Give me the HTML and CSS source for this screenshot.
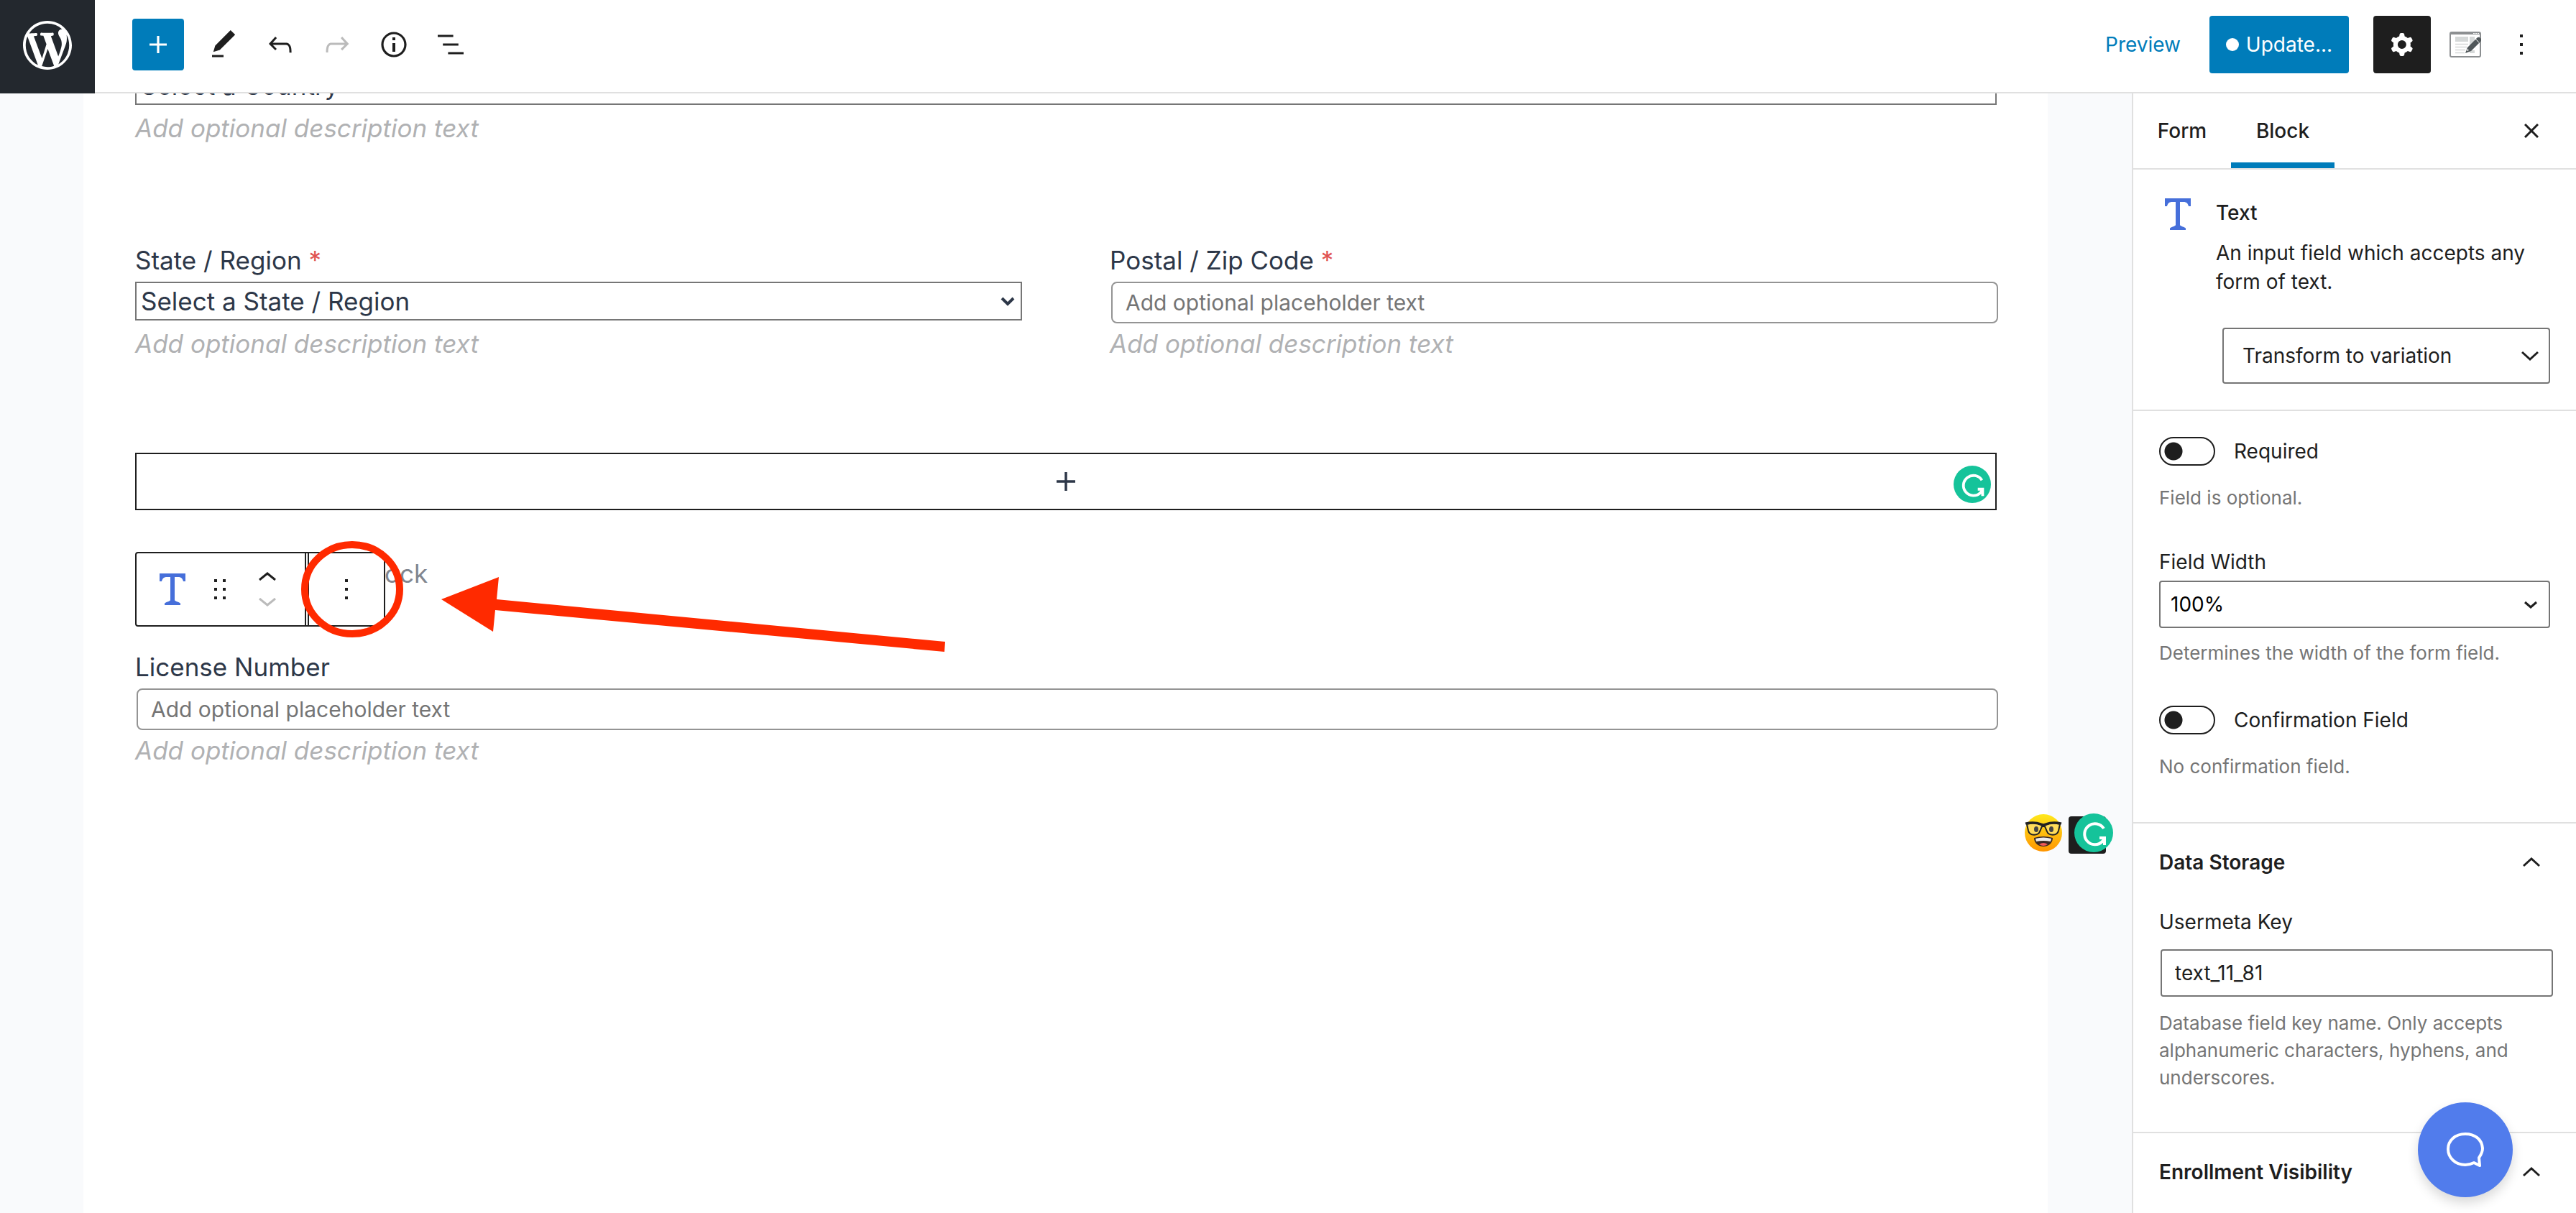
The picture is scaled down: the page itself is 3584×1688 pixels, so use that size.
FILE: index.html
```html
<!DOCTYPE html>
<html lang="en">
<head>
    <meta charset="UTF-8">
    <meta name="viewport" content="width=device-width, initial-scale=1.0">
    <title>Edit Form</title>
    <link rel="stylesheet" href="styles.css">
</head>
<body>

    <header class="header">
        <a class="wp-logo" href="#" aria-label="View forms">
            <svg viewBox="0 0 20 20" fill="currentColor"><path d="M20 10c0-5.51-4.49-10-10-10C4.48 0 0 4.49 0 10c0 5.52 4.48 10 10 10 5.51 0 10-4.48 10-10zM7.78 15.37L4.37 6.22c.55-.02 1.17-.08 1.17-.08.5-.06.44-1.13-.06-1.11 0 0-1.45.11-2.37.11-.18 0-.37 0-.58-.01C4.12 2.69 6.87 1.11 10 1.11c2.33 0 4.45.87 6.05 2.34-.68-.11-1.65.39-1.65 1.58 0 .74.45 1.36.9 2.1.35.61.55 1.36.55 2.46 0 1.49-1.4 5-1.4 5l-3.03-8.37c.54-.02.82-.17.82-.17.5-.05.44-1.25-.06-1.22 0 0-1.44.12-2.38.12-.87 0-2.33-.12-2.33-.12-.5-.03-.56 1.2-.06 1.22l.92.08 1.26 3.41zM17.41 10c.24-.64.74-1.87.43-4.25.7 1.29 1.05 2.71 1.05 4.25 0 3.29-1.73 6.24-4.4 7.78.97-2.59 1.94-5.2 2.92-7.78zM6.1 18.09C3.12 16.65 1.11 13.53 1.11 10c0-1.3.23-2.48.72-3.59C3.25 10.3 4.67 14.2 6.1 18.09zm4.03-6.63l2.58 6.98c-.86.29-1.76.45-2.71.45-.79 0-1.57-.11-2.29-.33.81-2.38 1.62-4.74 2.42-7.1z"/></svg>
        </a>
        <div class="tools">
            <button class="tool tool-add" aria-label="Add block">
                <svg viewBox="0 0 24 24" fill="currentColor"><path d="M18 11.2h-5.2V6h-1.6v5.2H6v1.6h5.2V18h1.6v-5.2H18z"/></svg>
            </button>
            <button class="tool" aria-label="Edit">
                <svg viewBox="0 0 24 24" fill="currentColor"><path d="M20.1 5.1L16.9 2 6.2 12.7l-1.3 4.4 4.5-1.3L20.1 5.1zM4 20.8h8v-1.5H4v1.5z"/></svg>
            </button>
            <button class="tool" aria-label="Undo">
                <svg viewBox="0 0 24 24" fill="currentColor"><path d="M18.3 11.7c-.6-.6-1.4-.9-2.3-.9H6.7l2.9-3.3-1.1-1-4.5 5L8.5 16l1-1-2.7-2.7H16c.5 0 .9.2 1.3.5 1 1 1 3.4 1 4.5v.3h1.5v-.2c0-1.5 0-4.3-1.5-5.7z"/></svg>
            </button>
            <button class="tool" aria-label="Redo" disabled>
                <svg viewBox="0 0 24 24" fill="currentColor"><path d="M15.6 6.5l-1.1 1 2.9 3.3H8c-.9 0-1.7.3-2.3.9-1.4 1.5-1.4 4.2-1.4 5.6v.2h1.5v-.3c0-1.1 0-3.5 1-4.5.3-.3.7-.5 1.3-.5h9.2L14.5 15l1.1 1.1 4.6-4.6-4.6-5z"/></svg>
            </button>
            <button class="tool" aria-label="Details">
                <svg viewBox="0 0 24 24" fill="currentColor"><path d="M12 3.2c-4.8 0-8.8 3.9-8.8 8.8 0 4.8 3.9 8.8 8.8 8.8 4.8 0 8.8-3.9 8.8-8.8 0-4.8-4-8.8-8.8-8.8zm0 16c-4 0-7.2-3.3-7.2-7.2C4.8 8 8 4.8 12 4.8s7.2 3.3 7.2 7.2c0 4-3.2 7.2-7.2 7.2zM11 17h2v-6h-2v6zm0-8h2V7h-2v2z"/></svg>
            </button>
            <button class="tool" aria-label="List view">
                <svg viewBox="0 0 24 24" fill="currentColor"><path d="M13.8 5.2H3v1.5h10.800V5.2zm-3.600 12v1.500H21v-1.500H10.200zm7.200-6H6.600v1.500h10.800v-1.500z"/></svg>
            </button>
        </div>
        <div class="actions">
            <a class="preview" href="#">Preview</a>
            <button class="update"><span class="dot"></span>Update...</button>
            <button class="settings" aria-label="Settings">
                <svg viewBox="0 0 24 24" fill="currentColor"><path fill-rule="evenodd" d="M10.289 4.836A1 1 0 0111.275 4h1.306a1 1 0 01.987.836l.244 1.466c.787.26 1.503.679 2.108 1.218l1.393-.522a1 1 0 011.216.437l.653 1.130a1 1 0 01-.23 1.273l-1.148.944a6.025 6.025 0 010 2.435l1.149.946a1 1 0 01.23 1.272l-.653 1.130a1 1 0 01-1.216.437l-1.394-.522c-.605.540-1.320.958-2.108 1.218l-.244 1.466a1 1 0 01-.987.836h-1.306a1 1 0 01-.986-.836l-.244-1.466a5.995 5.995 0 01-2.108-1.218l-1.394.522a1 1 0 01-1.217-.436l-.653-1.131a1 1 0 01.23-1.272l1.149-.946a6.026 6.026 0 010-2.435l-1.148-.944a1 1 0 01-.23-1.272l.653-1.131a1 1 0 011.217-.437l1.393.522a5.994 5.994 0 012.108-1.218l.244-1.466zM14.929 12a3 3 0 11-6 0 3 3 0 016 0z"/></svg>
            </button>
            <button class="plain" aria-label="Form templates">
                <svg class="pad-icon" viewBox="0 0 44 36">
                    <rect x="1" y="1" width="42" height="34" rx="2" fill="#fff" stroke="#8c8f91" stroke-width="2"/>
                    <path d="M1 1h42v3H1z" fill="#8c8f91"/>
                    <path d="M33 2h2v1h-2zM36 2h2v1h-2zM39 2h2v1h-2z" fill="#fff"/>
                    <path d="M8 7h18v7H8zM28 7h7v13h-7zM28 26h7v4h-7z" fill="#d5d8d8"/>
                    <path d="M8 17.500h18M8 21.500h16M8 25.500h14M8 29.500h13" stroke="#d5d8d8" stroke-width="1.500"/>
                    <path d="M22 30l3-8L37 10q3-4 6-1t0 5L30 27z" fill="#50575a"/>
                    <path d="M36 10l5 5" stroke="#fff"/>
                    <path d="M24 27l1-3 2 2z" fill="#fff"/>
                </svg>
            </button>
            <button class="plain plain-narrow" aria-label="Options">
                <svg viewBox="0 0 24 24" fill="currentColor"><path d="M13 19h-2v-2h2v2zm0-6h-2v-2h2v2zm0-6h-2V5h2v2z"/></svg>
            </button>
        </div>
    </header>

    <div class="editor">
        <main class="canvas">
            <div class="page">
                <div class="field field-country">
                    <select class="form-select" aria-label="Country"><option>Select a Country</option></select>
                    <p class="description">Add optional description text</p>
                </div>

                <div class="columns">
                    <div class="field">
                        <label for="state">State / Region <span class="required">*</span></label>
                        <div class="select-wrap">
                            <select class="form-select" id="state"><option>Select a State / Region</option></select>
                            <svg class="select-arrow" viewBox="0 0 20 20" fill="none" stroke="currentColor" stroke-width="4"><path d="M2 6l8 8 8-8"/></svg>
                        </div>
                        <p class="description">Add optional description text</p>
                    </div>
                    <div class="field">
                        <label for="zip">Postal / Zip Code <span class="required">*</span></label>
                        <input class="form-input" type="text" id="zip" placeholder="Add optional placeholder text">
                        <p class="description">Add optional description text</p>
                    </div>
                </div>

                <button class="appender" aria-label="Add block">
                    <svg class="plus" viewBox="0 0 24 24" fill="currentColor"><path d="M18 11.2h-5.2V6h-1.6v5.2H6v1.6h5.2V18h1.6v-5.2H18z"/></svg>
                    <svg class="grammarly" viewBox="0 0 54 54"><circle cx="27" cy="27" r="27" fill="#15c39a"/><path d="M41 21a14.500 14.500 0 1 0-2 18l3-4M35 34h7v10" fill="none" stroke="#fff" stroke-width="4"/></svg>
                </button>

                <div class="block-row">
                    <p class="prompt">Type / to choose a block</p>
                    <div class="block-toolbar">
                        <div class="toolbar-group">
                            <button class="bar-button" aria-label="Text">
                                <svg class="type-icon" viewBox="0 0 36 44"><path d="M0 0h36v11h-3c-1-4-3-6-7-6h-5v32c0 2 8 3 8 5v2H7v-2c0-2 8-3 8-5V5h-5c-4 0-6 2-7 6H0z"/></svg>
                            </button>
                            <button class="bar-button bar-drag" aria-label="Drag">
                                <svg viewBox="0 0 24 24" fill="currentColor"><path d="M8 5h2v2H8zM14 5h2v2h-2zM8 11h2v2H8zM14 11h2v2h-2zM8 17h2v2H8zM14 17h2v2h-2z"/></svg>
                            </button>
                            <div class="movers">
                                <button aria-label="Move up"><svg viewBox="0 0 24 12" fill="none" stroke="currentColor" stroke-width="3"><path d="M1 11L12 2l11 9"/></svg></button>
                                <button aria-label="Move down" disabled><svg viewBox="0 0 24 12" fill="none" stroke="currentColor" stroke-width="3"><path d="M1 1l11 9 11-9"/></svg></button>
                            </div>
                        </div>
                        <div class="toolbar-group toolbar-more">
                            <button class="bar-button" aria-label="More options">
                                <svg viewBox="0 0 24 24" fill="currentColor"><path d="M13 19h-2v-2h2v2zm0-6h-2v-2h2v2zm0-6h-2V5h2v2z"/></svg>
                            </button>
                        </div>
                    </div>
                    <svg class="annotation" viewBox="0 0 900 160">
                        <ellipse cx="72" cy="68" rx="66" ry="62" fill="none" stroke="#ff2a00" stroke-width="10"/>
                        <path d="M196 82l80-31-3 31 624 59-1 14-625-58-3 30z" fill="#ff2a00"/>
                    </svg>
                </div>

                <div class="field field-license">
                    <label for="license">License Number</label>
                    <input class="form-input" type="text" id="license" placeholder="Add optional placeholder text">
                    <p class="description">Add optional description text</p>
                </div>
            </div>

            <div class="badges">
                <svg class="emoji" viewBox="0 0 52 52">
                    <defs><linearGradient id="face" x1="0" y1="0" x2="0" y2="1"><stop offset="0" stop-color="#ffe81c"/><stop offset="1" stop-color="#ff9500"/></linearGradient></defs>
                    <circle cx="26" cy="26" r="26" fill="url(#face)"/>
                    <path d="M3 14q10-3 20 1l3 1 3-1q10-4 20-1l-2 9c-2 8-14 7-16 1l-3-7h-4l-3 7c-2 6-14 7-16-1z" fill="#ffdc5a" stroke="#222" stroke-width="2"/>
                    <path d="M1 13q12-3 22 1l3 1 3-1q10-4 22-1" fill="none" stroke="#222" stroke-width="3"/>
                    <ellipse cx="16" cy="21" rx="3" ry="4" fill="#444"/><ellipse cx="37" cy="21" rx="3" ry="4" fill="#444"/>
                    <path d="M13 33q13-4 26 0c0 16-26 16-26 0z" fill="#3a2a24"/><path d="M15 34q11-3 22 0l-1 4q-10-2-20 0z" fill="#eee"/><path d="M20 42q6-4 12 0-6 4-12 0z" fill="#f25a5a"/>
                </svg>
                <span class="black-box"></span>
                <svg class="grammarly" viewBox="0 0 54 54"><circle cx="27" cy="27" r="27" fill="#15c39a"/><path d="M41 21a14.500 14.500 0 1 0-2 18l3-4M35 34h7v10" fill="none" stroke="#fff" stroke-width="4"/></svg>
            </div>
        </main>

        <aside class="sidebar">
            <div class="tabs">
                <button class="tab">Form</button>
                <button class="tab tab-active">Block</button>
                <button class="close" aria-label="Close settings">
                    <svg viewBox="0 0 20 20" fill="none" stroke="currentColor" stroke-width="3"><path d="M1 1l18 18M19 1L1 19"/></svg>
                </button>
            </div>

            <section class="panel card">
                <svg class="type-icon" viewBox="0 0 36 44"><path d="M0 0h36v11h-3c-1-4-3-6-7-6h-5v32c0 2 8 3 8 5v2H7v-2c0-2 8-3 8-5V5h-5c-4 0-6 2-7 6H0z"/></svg>
                <div class="card-body">
                    <h2>Text</h2>
                    <p>An input field which accepts any form of text.</p>
                    <button class="transform">Transform to variation
                        <svg class="chevron" viewBox="0 0 24 16" fill="none" stroke="currentColor" stroke-width="3"><path d="M1 3l11 10L23 3"/></svg>
                    </button>
                </div>
            </section>

            <section class="panel general">
                <label class="toggle"><input type="checkbox">Required</label>
                <p class="help">Field is optional.</p>

                <label class="field-label" for="width">Field Width</label>
                <div class="select-wrap">
                    <select class="width-select" id="width"><option>100%</option></select>
                    <svg class="width-arrow" viewBox="0 0 18 12" fill="none" stroke="currentColor" stroke-width="3"><path d="M1 2l8 7 8-7"/></svg>
                </div>
                <p class="help help-width">Determines the width of the form field.</p>

                <label class="toggle"><input type="checkbox">Confirmation Field</label>
                <p class="help">No confirmation field.</p>
            </section>

            <section class="panel storage">
                <button class="panel-title">Data Storage
                    <svg class="chevron" viewBox="0 0 24 16" fill="none" stroke="currentColor" stroke-width="3"><path d="M1 13L12 3l11 10"/></svg>
                </button>
                <label class="field-label" for="usermeta">Usermeta Key</label>
                <input class="key-input" type="text" id="usermeta" value="text_11_81">
                <p class="help help-key">Database field key name. Only accepts alphanumeric characters, hyphens, and underscores.</p>
            </section>

            <section class="panel">
                <button class="panel-title">Enrollment Visibility
                    <svg class="chevron" viewBox="0 0 24 16" fill="none" stroke="currentColor" stroke-width="3"><path d="M1 13L12 3l11 10"/></svg>
                </button>
            </section>
        </aside>
    </div>

    <button class="chat" aria-label="Open chat">
        <svg viewBox="0 0 52 48" fill="none" stroke="#fff" stroke-width="4" stroke-linejoin="round"><path d="M45 35c2-3 5-7 5-13C49 9 39 2 26 2 12 2 2 11 2 23s10 22 24 22c5 0 8-1 12-3l8 4z"/></svg>
    </button>

</body>
</html>
```

FILE: styles.css
```css
* {
    box-sizing: border-box;
}
body {
    margin: 0;
    height: 100vh;
    display: flex;
    flex-direction: column;
    overflow: hidden;
    background: #fff;
    color: #1e1e1e;
    font-family: Inter, "Liberation Sans", sans-serif;
    font-size: 28px;
}
button, input, select {
    font: inherit;
    color: inherit;
}
button {
    display: flex;
    align-items: center;
    justify-content: center;
    padding: 0;
    border: 0;
    background: none;
    cursor: pointer;
}
button:disabled {
    color: #bbb;
}
svg {
    display: block;
    flex-shrink: 0;
}
h2, p {
    margin: 0;
}

/* header */
.header {
    display: flex;
    align-items: center;
    flex-shrink: 0;
    height: 130px;
    padding-right: 52px;
    border-bottom: 2px solid #e0e0e0;
}
.wp-logo {
    display: flex;
    align-items: center;
    justify-content: center;
    width: 132px;
    height: 130px;
    margin-bottom: -2px;
    padding-bottom: 4px;
    background: #23282e;
    color: #fff;
}
.wp-logo svg {
    width: 68px;
    height: 68px;
}
.tools {
    display: flex;
    gap: 7px;
    margin-left: 52px;
    margin-bottom: 4px;
}
.tool {
    width: 72px;
    height: 72px;
}
.tool svg, .settings svg, .plain svg, .bar-button svg {
    width: 48px;
    height: 48px;
}
.tool-add {
    margin-right: 12px;
    background: #007cba;
    color: #fff;
    border-radius: 4px;
}
.actions {
    display: flex;
    align-items: center;
    margin-left: auto;
    margin-bottom: 4px;
}
.preview {
    margin-right: 40px;
    color: #007cba;
    text-decoration: none;
}
.update {
    width: 194px;
    height: 80px;
    gap: 10px;
    background: #007cba;
    color: #fff;
    border-radius: 4px;
}
.dot {
    width: 18px;
    height: 18px;
    border-radius: 50%;
    background: #fff;
}
.settings {
    width: 80px;
    height: 80px;
    margin-left: 34px;
    background: #1e1e1e;
    color: #fff;
    border-radius: 4px;
}
.plain {
    width: 96px;
    height: 80px;
}
.plain .pad-icon {
    width: 44px;
    height: 36px;
}
.plain-narrow {
    width: 48px;
    margin-left: 6px;
}

/* layout */
.editor {
    display: flex;
    flex: 1;
    min-height: 0;
}
.canvas {
    position: relative;
    flex: 1;
    padding: 0 117px 0 116px;
    overflow: hidden;
    background: #f9fafc;
}
.page {
    display: flow-root;
    height: 100%;
    padding: 0 71px 0 72px;
    background: #fff;
    color: #2d3748;
    font-size: 35px;
}

/* form fields */
.field label {
    display: block;
    margin-bottom: 2px;
    line-height: 56px;
}
.required {
    color: #e05252;
}
.description {
    color: #b0b1b3;
    font-style: italic;
    line-height: 56px;
}
.select-wrap {
    position: relative;
}
.form-select {
    display: block;
    width: 100%;
    height: 54px;
    margin-bottom: 4px;
    padding: 0 6px;
    border: 2px solid #767676;
    border-radius: 0;
    background: #fff;
    appearance: none;
}
.select-arrow {
    position: absolute;
    right: 10px;
    top: 17px;
    width: 20px;
    height: 20px;
}
.form-input {
    display: block;
    width: 100%;
    height: 58px;
    margin-left: 2px;
    padding: 0 18px;
    border: 2px solid #949494;
    border-radius: 8px;
    background: #fff;
    font-size: 30px;
}
.form-input::placeholder {
    color: #757575;
    opacity: 1;
}
.field-country {
    margin-top: -38px;
}
.columns {
    display: grid;
    grid-template-columns: 1fr 1fr;
    gap: 122px;
    margin-top: 128px;
}
.appender {
    position: relative;
    width: 100%;
    height: 80px;
    margin-top: 124px;
    border: 2px solid #1e1e1e;
}
.plus {
    width: 52px;
    height: 52px;
}
.grammarly {
    width: 54px;
    height: 54px;
}
.appender .grammarly {
    position: absolute;
    right: 6px;
    bottom: 8px;
    width: 52px;
    height: 52px;
}

/* selected block */
.block-row {
    position: relative;
    height: 104px;
    margin-top: 58px;
}
.prompt {
    line-height: 60px;
    color: #81868f;
}
.block-toolbar {
    position: absolute;
    top: 0;
    left: 0;
    display: flex;
    height: 104px;
    border: 2px solid #1e1e1e;
    border-radius: 4px;
    background: #fff;
    color: #1e1e1e;
}
.toolbar-group {
    display: flex;
    align-items: center;
    width: 236px;
    padding-left: 14px;
    border-right: 2px solid #1e1e1e;
}
.toolbar-more {
    justify-content: center;
    width: 106px;
    margin-left: 2px;
    padding-left: 0;
    border-left: 2px solid #1e1e1e;
    border-right: 0;
}
.bar-button {
    width: 72px;
    height: 96px;
}
.bar-drag {
    width: 60px;
}
.bar-button .type-icon, .type-icon {
    width: 36px;
    height: 44px;
    fill: #466fda;
}
.movers {
    display: flex;
    flex-direction: column;
    gap: 24px;
    margin-left: 24px;
}
.movers svg {
    width: 24px;
    height: 12px;
}
.annotation {
    position: absolute;
    left: 230px;
    top: -16px;
    width: 900px;
    height: 160px;
    pointer-events: none;
}
.field-license {
    margin-top: 28px;
}
.badges {
    position: absolute;
    right: 26px;
    top: 1000px;
    display: flex;
    align-items: center;
}
.emoji {
    width: 52px;
    height: 52px;
}
.black-box {
    width: 52px;
    height: 52px;
    margin: 6px 0 0 9px;
    border-radius: 4px;
    background: #1e1e1e;
}
.badges .grammarly {
    margin-left: -44px;
}

/* sidebar */
.sidebar {
    width: 618px;
    flex-shrink: 0;
    overflow: hidden;
    border-left: 2px solid #e0e0e0;
}
.tabs {
    display: flex;
    height: 106px;
    border-bottom: 2px solid #e0e0e0;
    font-weight: 500;
}
.tab {
    width: 136px;
}
.tab-active {
    width: 144px;
    box-shadow: inset 0 -8px #007cba;
}
.close {
    width: 72px;
    margin-left: auto;
    margin-right: 26px;
}
.close svg {
    width: 20px;
    height: 20px;
}
.panel {
    padding: 0 36px;
    border-bottom: 2px solid #e0e0e0;
}
.panel:last-child {
    border-bottom: 0;
}
.card {
    display: flex;
    padding: 40px 36px 36px 44px;
}
.card-body {
    flex: 1;
    margin-left: 35px;
    line-height: 40px;
}
.card-body h2 {
    margin-bottom: 16px;
    font-size: 28px;
    font-weight: 500;
}
.transform {
    justify-content: space-between;
    width: 456px;
    height: 78px;
    margin: 44px 0 0 auto;
    padding: 0 14px 0 26px;
    border: 2px solid #757575;
    border-radius: 4px;
}
.chevron {
    width: 24px;
    height: 16px;
}
.toggle {
    display: flex;
    align-items: center;
    gap: 26px;
    line-height: 40px;
}
.toggle input {
    appearance: none;
    width: 78px;
    height: 40px;
    margin: 0;
    border: 2px solid #1e1e1e;
    border-radius: 20px;
    background: radial-gradient(circle at 18px 50%, #1e1e1e 12px, transparent 13px);
}
.help {
    color: #757575;
    font-size: 26px;
    line-height: 38px;
}
.general {
    padding-top: 36px;
    padding-bottom: 58px;
}
.toggle + .help {
    margin-top: 26px;
}
.field-label {
    display: block;
    line-height: 40px;
}
.general .field-label {
    margin-top: 50px;
    margin-bottom: 6px;
}
.width-select {
    display: block;
    width: 100%;
    height: 66px;
    padding: 0 14px;
    border: 2px solid #757575;
    border-radius: 4px;
    background: #fff;
    color: #000;
    appearance: none;
}
.width-arrow {
    position: absolute;
    right: 18px;
    top: 28px;
    width: 18px;
    height: 12px;
}
.help-width {
    margin: 16px 0 54px;
}
.panel-title {
    justify-content: space-between;
    width: 100%;
    height: 108px;
    padding-right: 14px;
    font-weight: 600;
}
.storage {
    padding-right: 32px;
    padding-bottom: 56px;
}
.storage .panel-title {
    padding-right: 18px;
}
.storage .field-label {
    margin-top: 9px;
    margin-bottom: 18px;
}
.key-input {
    display: block;
    width: 546px;
    height: 66px;
    margin-left: auto;
    padding: 0 18px;
    border: 2px solid #757575;
    border-radius: 4px;
}
.help-key {
    margin-top: 18px;
}
.chat {
    position: fixed;
    right: 88px;
    bottom: 22px;
    width: 132px;
    height: 132px;
    border-radius: 50%;
    background: #517cec;
    box-shadow: 0 8px 16px rgba(0, 0, 0, 0.15);
}
.chat svg {
    width: 52px;
    height: 48px;
}
```
